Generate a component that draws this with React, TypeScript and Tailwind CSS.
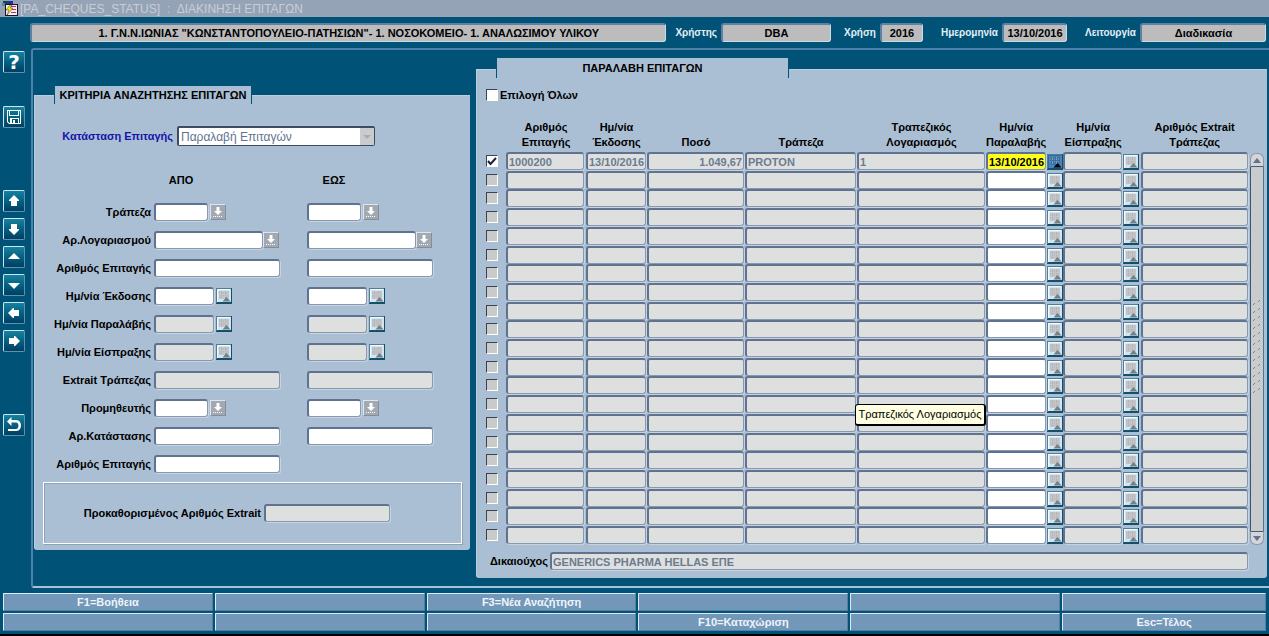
import React, { useState } from "react";

type IconName = "help" | "save" | "up" | "down" | "first" | "last" | "left" | "right" | "back";

const sideGroups: { name: IconName; label: string }[][] = [
  [{ name: "help", label: "Βοήθεια" }],
  [{ name: "save", label: "Αποθήκευση" }],
  [
    { name: "up", label: "Προηγούμενη ενότητα" },
    { name: "down", label: "Επόμενη ενότητα" },
    { name: "first", label: "Προηγούμενη εγγραφή" },
    { name: "last", label: "Επόμενη εγγραφή" },
    { name: "left", label: "Προηγούμενο πεδίο" },
    { name: "right", label: "Επόμενο πεδίο" },
  ],
  [{ name: "back", label: "Επιστροφή" }],
];

const sideGaps = ["mt-[3px]", "mt-[33px]", "mt-[62px]", "mt-[62px]"];

type Kind = "lov" | "account" | "date" | "text";

const criteria: { label: string; kind: Kind; disabled?: boolean; single?: boolean }[] = [
  { label: "Τράπεζα", kind: "lov" },
  { label: "Αρ.Λογαριασμού", kind: "account" },
  { label: "Αριθμός Επιταγής", kind: "text" },
  { label: "Ημ/νία Έκδοσης", kind: "date" },
  { label: "Ημ/νία Παραλάβής", kind: "date", disabled: true },
  { label: "Ημ/νία Είσπραξης", kind: "date", disabled: true },
  { label: "Extrait Τράπεζας", kind: "text", disabled: true },
  { label: "Προμηθευτής", kind: "lov" },
  { label: "Αρ.Κατάστασης", kind: "text" },
  { label: "Αριθμός Επιταγής", kind: "text", single: true },
];

const kindWidth = {
  lov: "w-[54px]",
  account: "w-[109px]",
  date: "w-[60px]",
  text: "w-[126px]",
};

const functionKeys = [
  "F1=Βοήθεια", "", "F3=Νέα Αναζήτηση", "", "", "",
  "", "", "", "F10=Καταχώριση", "", "Esc=Τέλος",
];

const rows = Array.from({ length: 21 }, (_, i) =>
  i === 0
    ? { number: "1000200", issued: "13/10/2016", amount: "1.049,67", bank: "PROTON", account: "1", received: "13/10/2016" }
    : { number: "", issued: "", amount: "", bank: "", account: "", received: "" }
);

const fieldBase =
  "block h-[18px] min-w-0 rounded-[3px] border-t-2 border-l-2 border-r border-b border-t-[#5f7391] border-l-[#5f7391] border-r-[#8699b1] border-b-[#8699b1] pl-[1px] text-[11px] leading-[15px] font-bold outline-none shadow-[1px_1px_0_#c8d3df]";

const Field: React.FC<React.InputHTMLAttributes<HTMLInputElement>> = ({ className = "", ...rest }) => (
  <input
    type="text"
    className={`${fieldBase} ${rest.readOnly ? "bg-[#dde0df] text-[#6d7b8f]" : "bg-white text-black"} ${className}`}
    {...rest}
  />
);

const SideIcon = ({ name }: { name: IconName }) => {
  if (name === "help") {
    return <span className="text-[20px] leading-none font-bold font-['DejaVu_Sans',sans-serif]">?</span>;
  }
  return (
    <svg viewBox="0 0 20 20" className="h-5 w-5" fill="currentColor">
      {name === "save" && (
        <path fillRule="evenodd" d="M3 3h14v14H5l-2-2zM4 4v10.500L5.500 16H6v-5h9v5h1V4h-1v5H5V4zM6 4v4h8V4zM8 12v4h1v-3h2v3h3v-4z" />
      )}
      {name === "up" && <path d="M10 4l5 5v1h-2v5H7v-5H5V9z" />}
      {name === "down" && <path d="M10 16l-5-5v-1h2V5h6v5h2v1z" />}
      {name === "first" && <path d="M10 6l6 6H4z" />}
      {name === "last" && <path d="M10 14L4 8h12z" />}
      {name === "left" && <path d="M4 10l5-5h1v2h5v6h-5v2H9z" />}
      {name === "right" && <path d="M16 10l-5-5h-1v2H5v6h5v2h1z" />}
      {name === "back" && (
        <path d="M7.500 2v9L3 6.500zM6 5h6.500c6 0 6 11 0 11H4v-2h8c3.300 0 3.300-6.500 0-6.500H6z" />
      )}
    </svg>
  );
};

const LovButton = ({ label }: { label: string }) => (
  <button type="button" aria-label={label} className="h-4 w-4 shrink-0 border-t border-l border-r border-b border-t-[#dfe6ee] border-l-[#dfe6ee] border-r-[#7f8ea0] border-b-[#7f8ea0] bg-[#a3a9b1]">
    <svg viewBox="0 0 14 14" className="h-[14px] w-[14px]" fill="#fff">
      <path d="M5.500 2h3v4H11L7 10 3 6h2.500z" />
      <path d="M2 11h1v1H2zm2 0h1v1H4zm2 0h1v1H6zm2 0h1v1H8zm2 0h1v1h-1z" />
    </svg>
  </button>
);

const DateButton = ({ label, active }: { label: string; active?: boolean }) => (
  <button type="button" aria-label={label} className="block h-4 w-4 shrink-0">
    <svg viewBox="0 0 16 16" className="h-4 w-4">
      <rect width="16" height="16" fill="#14506e" />
      <path d="M0 0h15v1H1v14H0z" fill="#4f7f98" />
      <rect x="1" y="1" width="14" height="13" fill={active ? "#4a84b4" : "#d3e6ef"} />
      <path d="M1 1h13v1H2v12H1z" fill={active ? "#2c6c9c" : "#f2fafc"} />
      <path d="M3 3h10v8H3z" fill={active ? "#3c6fa4" : "#c3c5c8"} />
      <path d="M3 5h10M3 8h10M5.500 3v8M9.500 3v8" stroke={active ? "#7fa9cf" : "#aeb2b7"} strokeWidth="1" strokeDasharray="1 1" />
      <path d="M10.500 9l4 4.500h-8z" fill={active ? "#000" : "#6f7f88"} />
    </svg>
  </button>
);

const Check = ({ label, checked, white, onChange }: { label: string; checked: boolean; white?: boolean; onChange: () => void }) => (
  <span className="relative block h-3 w-3">
    <input
      type="checkbox"
      aria-label={label}
      checked={checked}
      onChange={onChange}
      className={`block h-3 w-3 appearance-none border-t border-l border-r border-b border-t-[#3a4356] border-l-[#3a4356] border-r-white border-b-white ${white || checked ? "bg-white" : "bg-[#c9cbcb]"}`}
    />
    {checked && (
      <svg viewBox="0 0 12 12" className="pointer-events-none absolute inset-0 h-3 w-3" fill="none" stroke="#1c2233" strokeWidth="2">
        <path d="M2 6l2.500 3L10 3" />
      </svg>
    )}
  </span>
);

const Panel = ({ title, tabClass, className, children }: { title: string; tabClass: string; className: string; children: React.ReactNode }) => (
  <section className={className}>
    <h2 className={`relative ml-5 -mb-[9px] flex items-center justify-center border-r border-l border-[#005377] bg-[#aabfd3] text-[11px] font-bold ${tabClass}`}>
      {title}
    </h2>
    <div className="rounded-b-[3px] border-t border-l border-[#bccddd] bg-[#aabfd3]">{children}</div>
  </section>
);

const HeaderField = ({ id, label, value, width }: { id: string; label: string; value: string; width: string }) => (
  <div className="flex items-center gap-1">
    <label htmlFor={id} className="text-[10px] font-bold whitespace-nowrap text-[#e4eef5]">{label}</label>
    <input
      id={id}
      readOnly
      value={value}
      className={`h-[19px] rounded-[3px] border-t-2 border-l-2 border-r border-b border-t-[#5f7fa3] border-l-[#5f7fa3] border-r-[#c9dbe8] border-b-[#c9dbe8] bg-[#bcbcbc] text-center text-[11px] font-bold ${width}`}
    />
  </div>
);

const Criteria = () => (
  <Panel title="ΚΡΙΤΗΡΙΑ ΑΝΑΖΗΤΗΣΗΣ ΕΠΙΤΑΓΩΝ" tabClass="h-[18px] w-[198px]" className="w-[436px] shrink-0 pt-[36px]">
    <div className="pt-[30px] pb-[6px]">
      <div className="flex items-center">
        <label htmlFor="status" className="w-[142px] pr-1 text-right text-[11px] font-bold whitespace-nowrap text-[#1414a8]">Κατάσταση Επιταγής</label>
        <div className="relative">
          <select id="status" className="block h-5 w-[198px] appearance-none rounded-[2px] border-t-2 border-l-2 border-r border-b border-[#3f4b63] bg-white pl-[2px] text-[12px] leading-4 text-[#5f7391] outline-none">
            <option>Παραλαβή Επιταγών</option>
          </select>
          <span className="pointer-events-none absolute top-[2px] right-[1px] flex h-[17px] w-[14px] items-center justify-center bg-[#c9cbcd]">
            <svg viewBox="0 0 8 4" className="h-1 w-2" fill="#a9adb2"><path d="M0 0h8L4 4z" /></svg>
          </span>
        </div>
      </div>
      <div className="grid grid-cols-[119px_153px_1fr] pt-[25px] pb-[14px] text-[11px] leading-[18px] font-bold">
        <span className="col-start-2 w-[54px] text-center">ΑΠΟ</span>
        <span className="w-[54px] text-center">ΕΩΣ</span>
      </div>
      <div className="flex flex-col gap-[10px]">
        {criteria.map((row, i) => (
          <div key={i} className="grid grid-cols-[119px_153px_1fr] items-center">
            <label htmlFor={`from-${i}`} className="pr-[3px] text-right text-[11px] leading-[18px] font-bold whitespace-nowrap">{row.label}</label>
            {(row.single ? ["from"] : ["from", "to"]).map((side) => (
              <div key={side} className={`flex items-center ${row.kind === "account" ? "" : "gap-[2px]"}`}>
                <Field id={`${side}-${i}`} aria-label={`${row.label} ${side === "from" ? "από" : "έως"}`} readOnly={row.disabled} className={kindWidth[row.kind]} />
                {(row.kind === "lov" || row.kind === "account") && <LovButton label={`Λίστα ${row.label}`} />}
                {row.kind === "date" && <DateButton label={`Ημερολόγιο ${row.label}`} />}
              </div>
            ))}
          </div>
        ))}
      </div>
      <div className="mx-2 mt-[9px] flex h-[62px] items-center border border-white pl-[34px] shadow-[inset_1px_1px_0_#8fa3b8,1px_1px_0_#8fa3b8]">
        <label htmlFor="extrait" className="w-[183px] text-right text-[11px] font-bold whitespace-nowrap">Προκαθορισμένος Αριθμός Extrait</label>
        <Field id="extrait" readOnly className="ml-[3px] w-[126px]" />
      </div>
    </div>
  </Panel>
);

const Scrollbar = () => (
  <div className="flex h-[392px] w-[14px] flex-col">
    <button type="button" aria-label="Κύλιση πάνω" className="flex h-[14px] items-center justify-center rounded-t-[6px] border border-[#8a98a8] border-b-[#4a5b6e] bg-[#d3d5d8]">
      <svg viewBox="0 0 8 5" className="h-[5px] w-2" fill="#5f7391"><path d="M4 0l4 5H0z" /></svg>
    </button>
    <div className="flex flex-1 items-center justify-center border-r border-l border-r-[#4d7590] border-l-[#2f5a78] bg-[#c9cbcc]">
      <svg viewBox="0 0 8 100" className="h-[100px] w-2" stroke="#7f8285" strokeWidth="1">
        {Array.from({ length: 12 }, (_, i) => (
          <path key={i} d={`M0 ${i * 8 + 6}l2-2M5 ${i * 8 + 3}l2-2`} />
        ))}
      </svg>
    </div>
    <button type="button" aria-label="Κύλιση κάτω" className="flex h-[14px] items-center justify-center rounded-b-[6px] border border-[#8a98a8] border-t-[#4a5b6e] bg-[#d3d5d8]">
      <svg viewBox="0 0 8 5" className="h-[5px] w-2" fill="#5f7391"><path d="M0 0h8L4 5z" /></svg>
    </button>
  </div>
);

const Columns = () => (
  <colgroup>
    <col className="w-5" />
    <col className="w-20" />
    <col className="w-[61px]" />
    <col className="w-[98px]" />
    <col className="w-[112px]" />
    <col className="w-[129px]" />
    <col className="w-[60px]" />
    <col className="w-[17px]" />
    <col className="w-[60px]" />
    <col className="w-[18px]" />
    <col />
  </colgroup>
);

const Cheques = () => {
  const [all, setAll] = useState(false);
  const [selected, setSelected] = useState<number[]>([0]);

  const toggle = (i: number) => {
    setSelected((prev) => (prev.includes(i) ? prev.filter((n) => n !== i) : [...prev, i]));
  };

  const toggleAll = () => {
    setSelected(all ? [] : rows.map((_, i) => i));
    setAll(!all);
  };

  return (
    <Panel title="ΠΑΡΑΛΑΒΗ ΕΠΙΤΑΓΩΝ" tabClass="h-5 w-[293px]" className="min-w-0 flex-1 pt-2">
      <div className="pt-[17px] pr-[3px] pb-2 pl-[9px]">
        <label className="flex h-4 items-center gap-[2px] text-[11px] font-bold">
          <Check label="Επιλογή Όλων" checked={all} white onChange={toggleAll} />
          Επιλογή Όλων
        </label>
        {/* the scrollbar starts below the column titles */}
        <div className="flex items-end gap-[2px] pt-4">
          <table className="h-[426px] min-w-0 flex-1 table-fixed border-collapse">
            <Columns />
            <thead>
              <tr className="h-[33px] align-bottom text-[11px] leading-[15px] font-bold whitespace-nowrap">
                <td />
                <th className="pb-[2px]">Αριθμός<br />Επιταγής</th>
                <th className="pb-[2px]">Ημ/νία<br />Έκδοσης</th>
                <th className="pb-[2px]">Ποσό</th>
                <th className="pb-[2px]">Τράπεζα</th>
                <th className="pb-[2px]">Τραπεζικός<br />Λογαριασμός</th>
                <th className="pb-[2px]">Ημ/νία<br />Παραλαβής</th>
                <td />
                <th className="pb-[2px]">Ημ/νία<br />Είσπραξης</th>
                <td />
                <th className="pb-[2px]">Αριθμός Extrait<br />Τράπεζας</th>
              </tr>
            </thead>
            <tbody>
              {rows.map((row, i) => (
                <tr key={i} className="align-top">
                  <td className="pt-[3px]"><Check label={`Επιλογή ${i + 1}`} checked={selected.includes(i)} onChange={() => toggle(i)} /></td>
                  <td className="pr-[2px]"><Field aria-label="Αριθμός Επιταγής" readOnly value={row.number} className="w-full" /></td>
                  <td className="pr-[1px]"><Field aria-label="Ημ/νία Έκδοσης" readOnly value={row.issued} className="w-full" /></td>
                  <td className="pr-[1px]"><Field aria-label="Ποσό" readOnly value={row.amount} className="w-full pr-[1px] text-right" /></td>
                  <td className="pr-[1px]"><Field aria-label="Τράπεζα" readOnly value={row.bank} className="w-full" /></td>
                  <td className="relative pr-[1px]">
                    <Field aria-label="Τραπεζικός Λογαριασμός" readOnly value={row.account} className="w-full" />
                    {i === 13 && (
                      <div role="tooltip" className="absolute top-[9px] -left-[2px] z-10 flex h-[22px] w-[131px] items-center justify-center rounded-[3px] border border-r-2 border-b-2 border-black bg-[#ffffe1] text-[11px] whitespace-nowrap">
                        Τραπεζικός Λογαριασμός
                      </div>
                    )}
                  </td>
                  <td>
                    <Field
                      aria-label="Ημ/νία Παραλαβής"
                      defaultValue={row.received}
                      className={i === 0 ? "w-full bg-[#ffff1e]!" : "w-full"}
                    />
                  </td>
                  <td className="pt-[2px] pl-[1px]"><DateButton label="Ημερολόγιο Παραλαβής" active={i === 0} /></td>
                  <td className="pr-[1px]"><Field aria-label="Ημ/νία Είσπραξης" readOnly className="w-full" /></td>
                  <td className="pt-[2px]"><DateButton label="Ημερολόγιο Είσπραξης" /></td>
                  <td><Field aria-label="Αριθμός Extrait Τράπεζας" readOnly className="w-full" /></td>
                </tr>
              ))}
            </tbody>
          </table>
          <Scrollbar />
        </div>
        <div className="flex items-center gap-[2px] pt-[7px] pr-4">
          <label htmlFor="payee" className="w-[62px] text-right text-[11px] font-bold">Δικαιούχος</label>
          <Field id="payee" readOnly value="GENERICS PHARMA HELLAS ΕΠΕ" className="flex-1" />
        </div>
      </div>
    </Panel>
  );
};

export default function App() {
  return (
    <div className="flex min-h-screen flex-col border-b-2 border-black bg-[#005377] font-['Liberation_Sans',Arial,sans-serif] text-black">
      <header className="flex h-[17px] items-center gap-[2px] bg-[#94a3b6] pl-[2px]">
        <svg viewBox="0 0 16 16" className="h-4 w-4">
          <path d="M1 0h8v4H1z" fill="#1d3f6e" />
          <path d="M8 0h3v3H8z" fill="#2525c8" />
          <path d="M0 2h3v3H0z" fill="#3f9a86" />
          <path d="M3 3h13v12H3z" fill="#1a1030" />
          <path d="M4 4h11v10H4z" fill="#f6efef" />
          <path d="M9 5h5v1H9zM10 8h4v1h-4zM9 11h5v1H9z" fill="#b03060" />
          <path d="M8 4L4 9h3l-2 5 6-7H8l2-3z" fill="#f4e62a" stroke="#4a3a10" strokeWidth=".5" />
        </svg>
        <h1 className="text-[12px] leading-4 whitespace-pre text-[#c9ced6]">[PA_CHEQUES_STATUS]  :  ΔΙΑΚΙΝΗΣΗ ΕΠΙΤΑΓΩΝ</h1>
      </header>

      <div className="flex h-[31px] items-center pr-[3px] pl-[30px]">
        <input
          readOnly
          aria-label="Μονάδα"
          value={'1. Γ.Ν.Ν.ΙΩΝΙΑΣ "ΚΩΝΣΤΑΝΤΟΠΟΥΛΕΙΟ-ΠΑΤΗΣΙΩΝ"- 1. ΝΟΣΟΚΟΜΕΙΟ- 1. ΑΝΑΛΩΣΙΜΟΥ ΥΛΙΚΟΥ'}
          className="mr-[9px] h-[19px] min-w-0 flex-1 rounded-[3px] border-t-2 border-l-2 border-r border-b border-t-[#5f7fa3] border-l-[#5f7fa3] border-r-[#c9dbe8] border-b-[#c9dbe8] bg-[#bcbcbc] text-center text-[11px] font-bold"
        />
        <div className="flex gap-[13px]">
          <HeaderField id="user" label="Χρήστης" value="DBA" width="w-[110px]" />
          <HeaderField id="year" label="Χρήση" value="2016" width="w-[43px]" />
        </div>
        <div className="flex gap-[18px] pl-[18px]">
          <HeaderField id="date" label="Ημερομηνία" value="13/10/2016" width="w-[65px]" />
          <HeaderField id="mode" label="Λειτουργία" value="Διαδικασία" width="w-[126px]" />
        </div>
      </div>

      <div className="flex">
        <nav className="w-[31px] shrink-0 pl-[3px]">
          {sideGroups.map((group, i) => (
            <div key={i} className={`flex flex-col gap-[6px] ${sideGaps[i]}`}>
              {group.map((b) => (
                <button
                  key={b.name}
                  type="button"
                  aria-label={b.label}
                  className="flex h-[22px] w-[22px] items-center justify-center rounded-[2px] border-t border-l border-r border-b border-t-[#cfe6ee] border-l-[#cfe6ee] border-r-[#5d93b0] border-b-[#5d93b0] bg-linear-to-b from-[#1483a0] to-[#003f63] text-white"
                >
                  <SideIcon name={b.name} />
                </button>
              ))}
            </div>
          ))}
        </nav>
        <main className="flex min-w-0 flex-1 items-start gap-[6px] rounded-l-[3px] border-t-2 border-b-2 border-l-2 border-t-[#4f81aa] border-b-[#a3c4dc] border-l-[#4f81aa] pr-[2px] pb-2 pl-[1px]">
          <Criteria />
          <Cheques />
        </main>
      </div>

      <footer className="grid grid-cols-[repeat(5,210fr)_204fr] gap-[2px] px-[3px] pt-[5px] pb-[2px]">
        {functionKeys.map((key, i) => (
          <button
            key={i}
            type="button"
            aria-label={key || "Κενό πλήκτρο"}
            className="h-[18px] min-w-0 rounded-[1px] border-t border-l border-r border-b border-t-[#dcebf5] border-l-[#dcebf5] border-r-[#5580a3] border-b-[#5580a3] bg-[#7397b9] text-[11px] leading-4 font-bold text-[#eef5fa]"
          >
            {key}
          </button>
        ))}
      </footer>
    </div>
  );
}
